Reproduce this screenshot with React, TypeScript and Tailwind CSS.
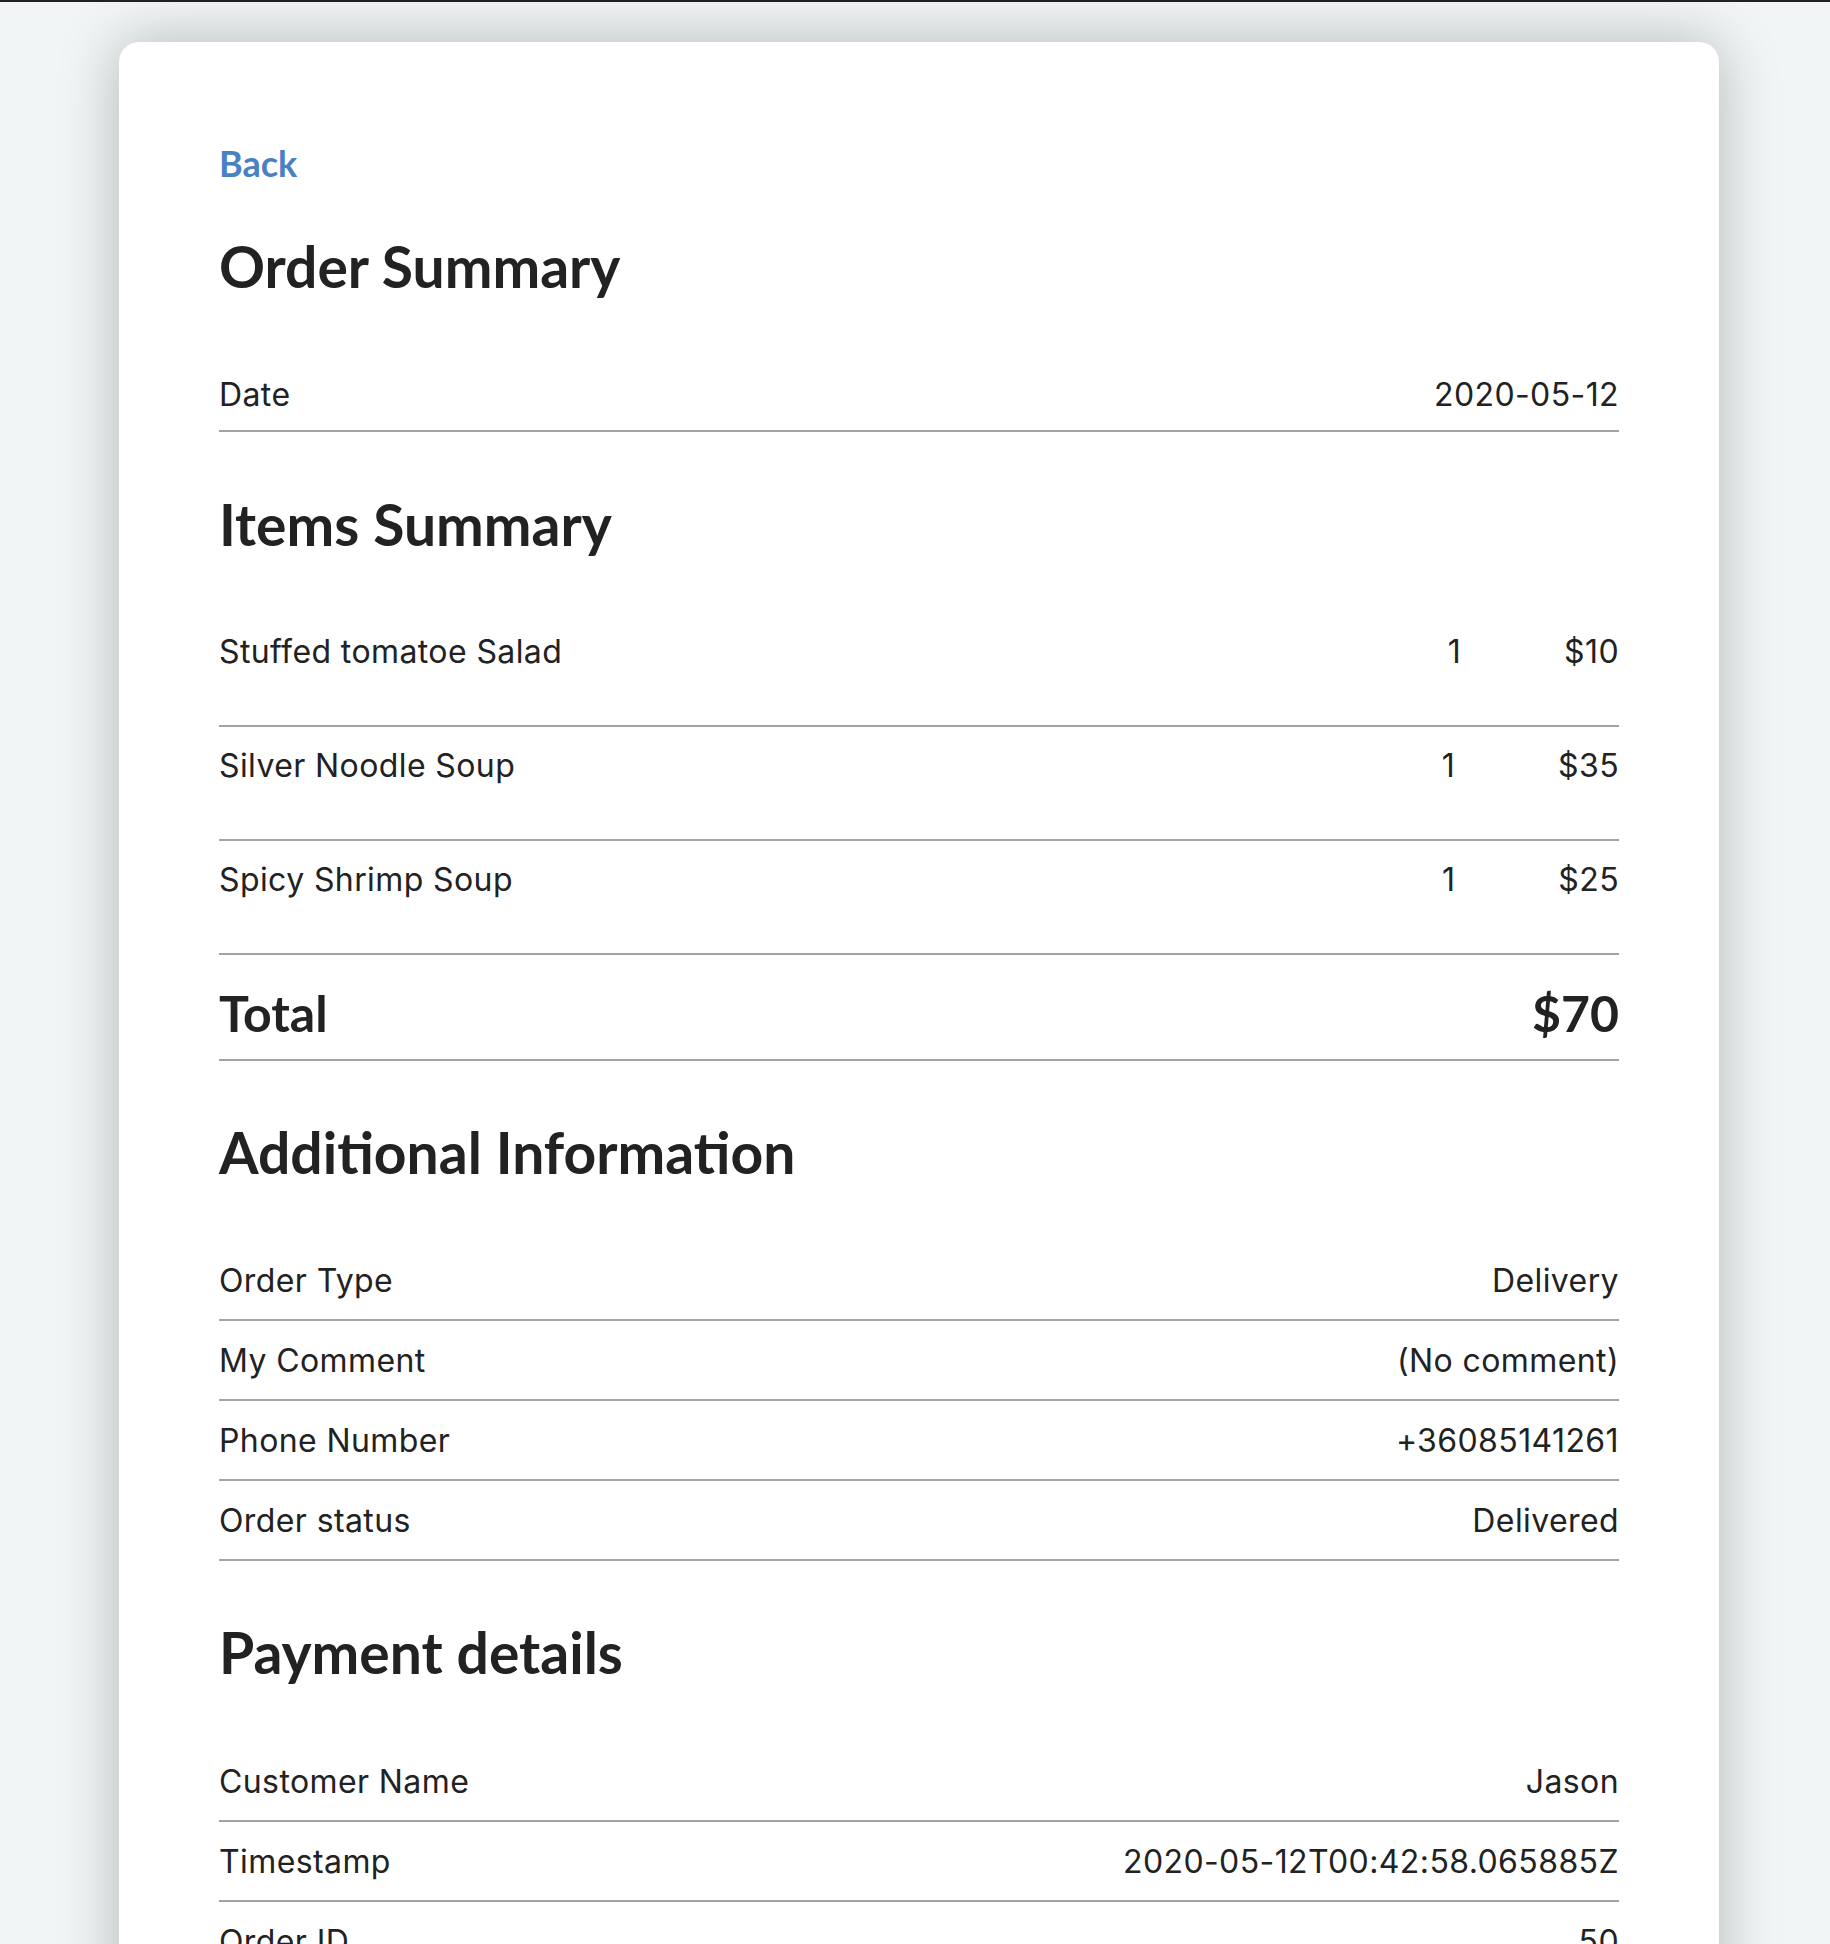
import React from "react";

const heading = "font-['Lato',sans-serif] font-bold text-[57px] leading-[1.2] text-[#222]";

const items = [
  { name: "Stuffed tomatoe Salad", qty: 1, price: "$10" },
  { name: "Silver Noodle Soup", qty: 1, price: "$35" },
  { name: "Spicy Shrimp Soup", qty: 1, price: "$25" },
];

const info = [
  ["Order Type", "Delivery"],
  ["My Comment", "(No comment)"],
  ["Phone Number", "+36085141261"],
  ["Order status", "Delivered"],
];

const payment = [
  ["Customer Name", "Jason"],
  ["Timestamp", "2020-05-12T00:42:58.065885Z"],
  ["Order ID", "50"],
];

function InfoRow({ label, value }: { label: string; value: string }) {
  return (
    <div className="flex justify-between pt-[17px] pb-[16px] border-b-2 border-[#a3a3a3] text-[32px] leading-[45px] tracking-[0.4px]">
      <span>{label}</span>
      <span>{value}</span>
    </div>
  );
}

export default function App() {
  return (
    <div className="min-h-screen bg-[#f1f5f6] border-t-2 border-[#222] pt-[40px] pb-[80px] font-['Inter',sans-serif] text-[#222]">
      {/* CARD */}
      <div className="ml-[119px] w-[1600px] bg-white rounded-[20px] shadow-[0_0_60px_rgba(0,0,0,0.26)] px-[100px] pt-[100px] pb-[100px]">
        <a className="block font-['Lato',sans-serif] font-bold text-[36px] leading-[1.2] text-[#4a80c4]">Back</a>

        {/* ORDER SUMMARY */}
        <h1 className={`${heading} mt-[47px] mb-[55px]`}>Order Summary</h1>
        <div className="flex justify-between pt-[16px] pb-[13px] border-b-2 border-[#a3a3a3] text-[32px] leading-[45px] tracking-[0.4px]">
          <span>Date</span>
          <span>2020-05-12</span>
        </div>

        {/* ITEMS */}
        <h2 className={`${heading} mt-[58px] mb-[55px]`}>Items Summary</h2>
        {items.map((it) => (
          <div
            key={it.name}
            className="flex items-start pt-[16px] pb-[51px] border-b-2 border-[#a3a3a3] text-[32px] leading-[45px] tracking-[0.4px]"
          >
            <span className="flex-1">{it.name}</span>
            <span>{it.qty}</span>
            <span className="ml-[103px]">{it.price}</span>
          </div>
        ))}
        <div className="flex justify-between pt-[28px] pb-[16px] border-b-2 border-[#a3a3a3] font-['Lato',sans-serif] font-bold text-[50px] leading-[1.2]">
          <span>Total</span>
          <span>$70</span>
        </div>

        {/* ADDITIONAL INFO */}
        <h2 className={`${heading} mt-[57px] mb-[55px]`}>Additional Information</h2>
        {info.map(([l, v]) => (
          <InfoRow key={l} label={l} value={v} />
        ))}

        {/* PAYMENT */}
        <h2 className={`${heading} mt-[57px] mb-[55px]`}>Payment details</h2>
        {payment.map(([l, v]) => (
          <InfoRow key={l} label={l} value={v} />
        ))}
      </div>
    </div>
  );
}
